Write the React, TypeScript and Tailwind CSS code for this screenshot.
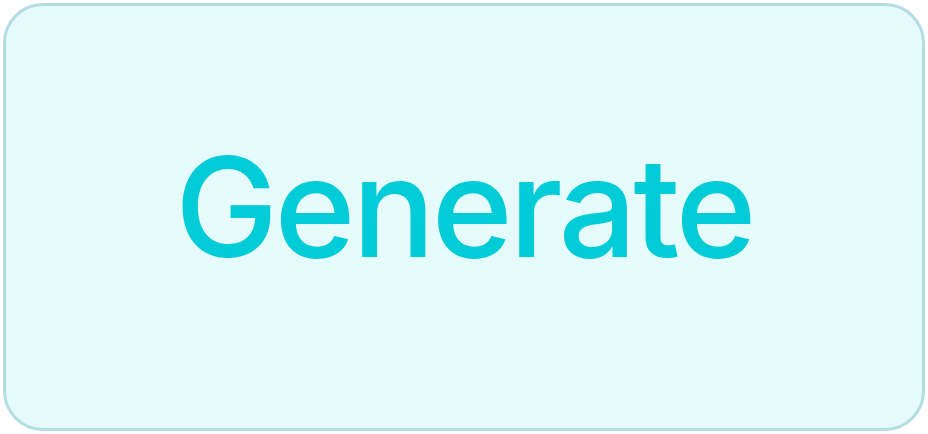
export default function App() {
  return (
    <div className="w-[928px] h-[434px] bg-white p-[3px]">
      <button
        type="button"
        className="w-full h-full rounded-[40px] border-[3px] border-[#b3dde4] bg-[#e6fbfc] flex items-center justify-center pb-[20px]"
      >
        <span
          className="text-[138px] leading-none font-medium text-[#00ccd8] tracking-[-3.5px]"
          style={{ fontFamily: 'Inter, "Liberation Sans", Arial, sans-serif' }}
        >
          Generate
        </span>
      </button>
    </div>
  );
}
